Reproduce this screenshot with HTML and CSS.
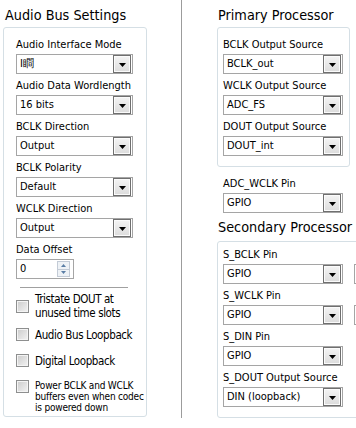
FILE: index.html
```html
<!DOCTYPE html>
<html>
<head>
<meta charset="utf-8">
<link rel="stylesheet" href="styles.css">
</head>
<body>
<div class="page">
  <section class="col col-left">
    <h2 class="title">Audio Bus Settings</h2>
    <div class="group group-left">
      <div class="lbl">Audio Interface Mode</div>
      <div class="sel sel-l"><span class="val">I瞷</span><span class="btn"><svg width="7" height="4" viewBox="0 0 7 4"><path d="M0 0H7L3.5 4Z"/></svg></span></div>
      <div class="lbl">Audio Data Wordlength</div>
      <div class="sel sel-l"><span class="val">16 bits</span><span class="btn"><svg width="7" height="4" viewBox="0 0 7 4"><path d="M0 0H7L3.5 4Z"/></svg></span></div>
      <div class="lbl">BCLK Direction</div>
      <div class="sel sel-l"><span class="val">Output</span><span class="btn"><svg width="7" height="4" viewBox="0 0 7 4"><path d="M0 0H7L3.5 4Z"/></svg></span></div>
      <div class="lbl">BCLK Polarity</div>
      <div class="sel sel-l"><span class="val">Default</span><span class="btn"><svg width="7" height="4" viewBox="0 0 7 4"><path d="M0 0H7L3.5 4Z"/></svg></span></div>
      <div class="lbl">WCLK Direction</div>
      <div class="sel sel-l"><span class="val">Output</span><span class="btn"><svg width="7" height="4" viewBox="0 0 7 4"><path d="M0 0H7L3.5 4Z"/></svg></span></div>
      <div class="lbl">Data Offset</div>
      <div class="spin"><span class="val">0</span><span class="spin-btns"><span class="half"><svg width="5" height="3" viewBox="0 0 5 3"><path d="M2.5 0L5 3H0Z"/></svg></span><span class="half"><svg width="5" height="3" viewBox="0 0 5 3"><path d="M0 0H5L2.5 3Z"/></svg></span></span></div>
      <div class="sep"></div>
      <div class="chk chk-1"><span class="box"></span><span class="txt txt-two">Tristate DOUT at<br>unused time slots</span></div>
      <div class="chk chk-2"><span class="box"></span><span class="txt">Audio Bus Loopback</span></div>
      <div class="chk chk-3"><span class="box"></span><span class="txt">Digital Loopback</span></div>
      <div class="chk chk-4"><span class="box"></span><span class="txt small">Power BCLK and WCLK<br>buffers even when codec<br>is powered down</span></div>
    </div>
  </section>
  <div class="divider"></div>
  <section class="col col-right">
    <h2 class="title title-r">Primary Processor</h2>
    <div class="group group-pri">
      <div class="lbl">BCLK Output Source</div>
      <div class="sel sel-r"><span class="val">BCLK_out</span><span class="btn"><svg width="7" height="4" viewBox="0 0 7 4"><path d="M0 0H7L3.5 4Z"/></svg></span></div>
      <div class="lbl">WCLK Output Source</div>
      <div class="sel sel-r"><span class="val">ADC_FS</span><span class="btn"><svg width="7" height="4" viewBox="0 0 7 4"><path d="M0 0H7L3.5 4Z"/></svg></span></div>
      <div class="lbl">DOUT Output Source</div>
      <div class="sel sel-r"><span class="val">DOUT_int</span><span class="btn"><svg width="7" height="4" viewBox="0 0 7 4"><path d="M0 0H7L3.5 4Z"/></svg></span></div>
    </div>
    <div class="solo">
      <div class="lbl">ADC_WCLK Pin</div>
      <div class="sel sel-r"><span class="val">GPIO</span><span class="btn"><svg width="7" height="4" viewBox="0 0 7 4"><path d="M0 0H7L3.5 4Z"/></svg></span></div>
    </div>
    <h2 class="title title-r title-sec">Secondary Processor</h2>
    <div class="group group-sec">
      <div class="row">
        <div class="field">
          <div class="lbl">S_BCLK Pin</div>
          <div class="sel sel-r"><span class="val">GPIO</span><span class="btn"><svg width="7" height="4" viewBox="0 0 7 4"><path d="M0 0H7L3.5 4Z"/></svg></span></div>
        </div>
        <div class="field">
          <div class="lbl">&nbsp;</div>
          <div class="sel sel-r"><span class="val"></span></div>
        </div>
      </div>
      <div class="row">
        <div class="field">
          <div class="lbl">S_WCLK Pin</div>
          <div class="sel sel-r"><span class="val">GPIO</span><span class="btn"><svg width="7" height="4" viewBox="0 0 7 4"><path d="M0 0H7L3.5 4Z"/></svg></span></div>
        </div>
        <div class="field">
          <div class="lbl">&nbsp;</div>
          <div class="sel sel-r"><span class="val"></span></div>
        </div>
      </div>
      <div class="row">
        <div class="field">
          <div class="lbl">S_DIN Pin</div>
          <div class="sel sel-r"><span class="val">GPIO</span><span class="btn"><svg width="7" height="4" viewBox="0 0 7 4"><path d="M0 0H7L3.5 4Z"/></svg></span></div>
        </div>
      </div>
      <div class="row">
        <div class="field">
          <div class="lbl">S_DOUT Output Source</div>
          <div class="sel sel-r"><span class="val">DIN (loopback)</span><span class="btn"><svg width="7" height="4" viewBox="0 0 7 4"><path d="M0 0H7L3.5 4Z"/></svg></span></div>
        </div>
      </div>
    </div>
  </section>
</div>
</body>
</html>
```
FILE: styles.css
```css
html, body {
  margin: 0;
  padding: 0;
}
body {
  width: 356px;
  height: 428px;
  overflow: hidden;
  background: #fff;
  color: #000;
  font-family: "DejaVu Sans Condensed", "DejaVu Sans", sans-serif;
  font-stretch: condensed;
  font-size: 11px;
}
.page {
  display: flex;
  align-items: flex-start;
  height: 428px;
}
.col-left {
  margin-left: 3px;
  width: 144px;
  flex: none;
}
.divider {
  flex: none;
  margin-left: 34px;
  width: 1px;
  height: 418px;
  background: #9c9c9c;
}
.col-right {
  flex: none;
  margin-left: 35px;
  width: 300px;
}
.title {
  margin: 6px 0 3px 2px;
  font-size: 14.3px;
  line-height: 18px;
  font-weight: normal;
  white-space: nowrap;
}
.title-r {
  margin-left: 1px;
}
.title-sec {
  margin-top: 1px;
  margin-bottom: 5px;
}
.group {
  border: 1px solid #d5dfe5;
  border-radius: 3px;
  box-sizing: border-box;
}
.group-left {
  width: 144px;
  padding: 10px 0 3px 12px;
}
.group-pri {
  width: 133px;
  padding: 10px 6px 5px 5px;
}
.group-sec {
  width: 290px;
  padding: 6px 0 5px 5px;
}
.row {
  display: flex;
  gap: 11px;
}
.field {
  width: 120px;
  flex: none;
}
.solo {
  margin: 10px 0 0 6px;
}
.lbl {
  line-height: 13px;
  margin-bottom: 3px;
  white-space: nowrap;
}
.sel {
  display: flex;
  align-items: center;
  height: 20px;
  box-sizing: border-box;
  border: 1px solid #a5a5a5;
  background: #fff;
  margin-bottom: 5px;
  padding-right: 1px;
}
.sel-l {
  width: 117px;
}
.sel-r {
  width: 120px;
}
.val {
  flex: 1;
  padding-left: 3px;
  line-height: 18px;
  white-space: nowrap;
  overflow: hidden;
}
.btn {
  flex: none;
  width: 18px;
  height: 18px;
  box-sizing: border-box;
  border: 1px solid #6f6f6f;
  background: linear-gradient(#f4f4f4, #dcdcdc);
  box-shadow: inset 0 0 0 1px #fbfbfb;
  display: flex;
  align-items: center;
  justify-content: center;
  padding-top: 2px;
}
.btn svg {
  display: block;
  fill: #000;
}
.spin {
  display: flex;
  align-items: center;
  width: 58px;
  height: 20px;
  box-sizing: border-box;
  border: 1px solid #a5a5a5;
}
.spin-btns {
  flex: none;
  margin-right: 3px;
  width: 13px;
  height: 16px;
  display: flex;
  flex-direction: column;
  box-sizing: border-box;
  border: 1px solid #c3cbd6;
  background: #eef2f6;
}
.half {
  flex: 1;
  display: flex;
  align-items: center;
  justify-content: center;
}
.half + .half {
  border-top: 1px solid #c3cbd6;
}
.half svg {
  display: block;
  fill: #5b7ea6;
}
.sep {
  width: 108px;
  height: 1px;
  margin: 8px 0 0 4px;
  background: #a0a0a0;
}
.chk {
  display: flex;
  align-items: center;
  gap: 6px;
}
.chk-1 {
  margin-top: 5px;
}
.chk-2 {
  margin-top: 8px;
}
.chk-3 {
  margin-top: 13px;
}
.chk-4 {
  margin-top: 13px;
  align-items: flex-start;
}
.box {
  flex: none;
  width: 13px;
  height: 13px;
  box-sizing: border-box;
  border: 1px solid #8e8f8f;
  background: linear-gradient(135deg, #cbcbcb, #f3f3f3);
  box-shadow: inset 0 0 0 1px #f4f4f4;
}
.txt {
  font-size: 11.5px;
  line-height: 12px;
  letter-spacing: -0.4px;
  white-space: nowrap;
}
.txt-two {
  line-height: 13.5px;
}
.txt.small {
  font-size: 10px;
  line-height: 11px;
  letter-spacing: -0.2px;
}
```
